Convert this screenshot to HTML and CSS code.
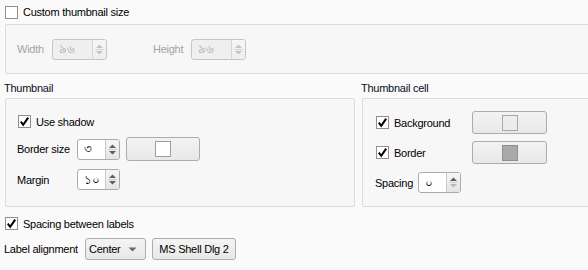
FILE: index.html
```html
<!DOCTYPE html>
<html>
<head>
<meta charset="utf-8">
<link rel="stylesheet" href="styles.css">
</head>
<body>
<div class="top-row">
  <span class="cb"></span><span class="cb-text">Custom thumbnail size</span>
</div>
<div class="group1">
  <span class="lbl dis lbl-w">Width</span>
  <span class="spin spin-dis spin-w"><span class="field">৯৬</span><span class="arrows"><svg width="13" height="17" viewBox="0 0 13 17"><path d="M3 7 L6.5 3.5 L10 7 Z M3 10 L10 10 L6.5 13.5 Z" fill="#c4c4c4"/><path d="M2 8.5 H11" stroke="#d4d4d4"/></svg></span></span>
  <span class="lbl dis lbl-h">Height</span>
  <span class="spin spin-dis spin-w"><span class="field">৯৬</span><span class="arrows"><svg width="13" height="17" viewBox="0 0 13 17"><path d="M3 7 L6.5 3.5 L10 7 Z M3 10 L10 10 L6.5 13.5 Z" fill="#c4c4c4"/><path d="M2 8.5 H11" stroke="#d4d4d4"/></svg></span></span>
</div>
<div class="cols">
  <div class="col1">
    <div class="title">Thumbnail</div>
    <div class="group group2">
      <div class="row r1">
        <span class="cb on"><svg width="11" height="11" viewBox="0 0 11 11"><path d="M1.8 5.6 L4.2 8.8 L9.2 1.6" fill="none" stroke="#000" stroke-width="2"/></svg></span><span class="cb-text">Use shadow</span>
      </div>
      <div class="row r2">
        <span class="lbl lbl-bs">Border size</span>
        <span class="spin spin-s"><span class="field">৩</span><span class="arrows"><svg width="13" height="19" viewBox="0 0 13 19"><path d="M3 8 L6.5 4.5 L10 8 Z M3 11 L10 11 L6.5 14.5 Z" fill="#5f5f5f"/><path d="M2 9.5 H11" stroke="#cfcfcf"/></svg></span></span>
        <span class="cbtn cbtn-1"><span class="swatch sw-white"></span></span>
      </div>
      <div class="row r3">
        <span class="lbl lbl-bs">Margin</span>
        <span class="spin spin-s"><span class="field">১০</span><span class="arrows"><svg width="13" height="19" viewBox="0 0 13 19"><path d="M3 8 L6.5 4.5 L10 8 Z M3 11 L10 11 L6.5 14.5 Z" fill="#5f5f5f"/><path d="M2 9.5 H11" stroke="#cfcfcf"/></svg></span></span>
      </div>
    </div>
  </div>
  <div class="col2">
    <div class="title">Thumbnail cell</div>
    <div class="group group3">
      <div class="row c1">
        <span class="cbwrap"><span class="cb on"><svg width="11" height="11" viewBox="0 0 11 11"><path d="M1.8 5.6 L4.2 8.8 L9.2 1.6" fill="none" stroke="#000" stroke-width="2"/></svg></span><span class="cb-text">Background</span></span>
        <span class="cbtn cbtn-2"><span class="swatch sw-light"></span></span>
      </div>
      <div class="row c2">
        <span class="cbwrap"><span class="cb on"><svg width="11" height="11" viewBox="0 0 11 11"><path d="M1.8 5.6 L4.2 8.8 L9.2 1.6" fill="none" stroke="#000" stroke-width="2"/></svg></span><span class="cb-text">Border</span></span>
        <span class="cbtn cbtn-2"><span class="swatch sw-gray"></span></span>
      </div>
      <div class="row c3">
        <span class="lbl lbl-sp">Spacing</span>
        <span class="spin spin-s"><span class="field">০</span><span class="arrows"><svg width="13" height="19" viewBox="0 0 13 19"><path d="M3 8 L6.5 4.5 L10 8 Z" fill="#5f5f5f"/><path d="M3 11 L10 11 L6.5 14.5 Z" fill="#b8b8b8"/><path d="M2 9.5 H11" stroke="#cfcfcf"/></svg></span></span>
      </div>
    </div>
  </div>
</div>
<div class="row b1">
  <span class="cb on"><svg width="11" height="11" viewBox="0 0 11 11"><path d="M1.8 5.6 L4.2 8.8 L9.2 1.6" fill="none" stroke="#000" stroke-width="2"/></svg></span><span class="cb-text">Spacing between labels</span>
</div>
<div class="row b2">
  <span class="lbl lbl-la">Label alignment</span>
  <span class="combo"><span class="combo-text">Center</span><svg width="9" height="5" viewBox="0 0 9 5"><path d="M0.5 0.5 H8.5 L4.5 4.5 Z" fill="#6a6a6a"/></svg></span>
  <span class="pbtn">MS Shell Dlg 2</span>
</div>
</body>
</html>
```

FILE: styles.css
```css
html, body {
  margin: 0;
  padding: 0;
}
body {
  width: 588px;
  height: 270px;
  overflow: hidden;
  background: #fafafa;
  font-family: "Liberation Sans", Arial, sans-serif;
  font-size: 11px;
  letter-spacing: -0.25px;
  color: #000;
  line-height: 14px;
}
.top-row {
  height: 24px;
  display: flex;
  align-items: center;
  padding-left: 5px;
}
.cb {
  width: 13px;
  height: 13px;
  box-sizing: border-box;
  border: 1px solid #8f8f8f;
  background: #fff;
  display: inline-flex;
  align-items: center;
  justify-content: center;
  flex: none;
}
.cb-text {
  margin-left: 5px;
  white-space: nowrap;
}
.group1 {
  margin-left: 5px;
  height: 50px;
  box-sizing: border-box;
  border: 1px solid #dcdcdc;
  border-right: none;
  border-radius: 2px 0 0 2px;
  background: #f7f7f7;
  display: flex;
  align-items: center;
  padding-left: 11px;
}
.lbl {
  white-space: nowrap;
  flex: none;
}
.dis {
  color: #a3a3a3;
}
.lbl-w { width: 35px; }
.lbl-h { width: 38px; margin-left: 46px; }
.spin {
  display: inline-flex;
  box-sizing: border-box;
  border: 1px solid #ababab;
  border-radius: 3px;
  background: #fff;
  overflow: hidden;
  flex: none;
}
.spin .field {
  flex: 1;
  padding-left: 6px;
  display: flex;
  align-items: center;
  font-size: 12px;
  letter-spacing: 0;
}
.spin .arrows {
  width: 13px;
  border-left: 1px solid #c9c9c9;
  background: linear-gradient(#f6f6f6, #e4e4e4);
  display: flex;
  align-items: center;
  justify-content: center;
}
.spin-w {
  width: 55px;
  height: 21px;
}
.spin-dis {
  border-color: #c6c6c6;
  background: #efefef;
  color: #ababab;
}
.spin-dis .arrows {
  background: linear-gradient(#f7f7f7, #ededed);
  border-left-color: #d6d6d6;
}
.spin-s {
  width: 43px;
  height: 21px;
}
.cols {
  display: flex;
}
.col1 {
  margin-left: 4px;
  width: 351px;
}
.col2 {
  margin-left: 6px;
  flex: 1;
}
.title {
  height: 24px;
  display: flex;
  align-items: flex-end;
  padding-bottom: 3px;
  box-sizing: border-box;
  color: #0c0c1a;
}
.group {
  margin-left: 1px;
  height: 109px;
  box-sizing: border-box;
  border: 1px solid #dcdcdc;
  border-radius: 2px;
  background: #f7f7f7;
}
.group2 {
  padding-left: 11px;
}
.group3 {
  border-right: none;
  border-radius: 2px 0 0 2px;
  padding-left: 12px;
}
.row {
  display: flex;
  align-items: center;
}
.r1 { margin-top: 12px; height: 21px; padding-left: 1px; }
.r2 { margin-top: 5px; height: 24px; }
.r3 { margin-top: 8px; height: 21px; }
.lbl-bs { width: 60px; }
.cbtn {
  box-sizing: border-box;
  border: 1px solid #acacac;
  border-radius: 3px;
  background: linear-gradient(#f3f3f3, #e8e8e8);
  display: inline-flex;
  align-items: center;
  justify-content: center;
  flex: none;
}
.cbtn-1 {
  width: 74px;
  height: 24px;
  margin-left: 6px;
}
.cbtn-2 {
  width: 75px;
  height: 23px;
}
.swatch {
  width: 16px;
  height: 16px;
  box-sizing: border-box;
  border: 1px solid #9e9e9e;
}
.sw-white { background: #fff; }
.sw-light { background: #ececec; border-color: #a8a8a8; }
.sw-gray { background: #a9a9a9; border-color: #8f8f8f; }
.cbwrap {
  width: 97px;
  padding-left: 1px;
  box-sizing: border-box;
  display: flex;
  align-items: center;
  flex: none;
}
.c1 { margin-top: 12px; height: 23px; }
.c2 { margin-top: 7px; height: 23px; }
.c3 { margin-top: 8px; height: 21px; }
.lbl-sp { width: 43px; }
.b1 {
  margin-top: 6px;
  height: 21px;
  padding-left: 5px;
}
.b2 {
  margin-top: 4px;
  height: 22px;
  padding-left: 4px;
}
.lbl-la { width: 81px; }
.combo {
  width: 61px;
  height: 22px;
  box-sizing: border-box;
  border: 1px solid #adadad;
  border-radius: 3px;
  background: linear-gradient(#f4f4f4, #e8e8e8);
  display: inline-flex;
  align-items: center;
  padding-left: 3px;
  padding-right: 8px;
  justify-content: space-between;
  flex: none;
}
.pbtn {
  margin-left: 6px;
  width: 84px;
  height: 22px;
  box-sizing: border-box;
  border: 1px solid #adadad;
  border-radius: 3px;
  background: linear-gradient(#f4f4f4, #e8e8e8);
  display: inline-flex;
  align-items: center;
  justify-content: center;
  white-space: nowrap;
  flex: none;
}
```
